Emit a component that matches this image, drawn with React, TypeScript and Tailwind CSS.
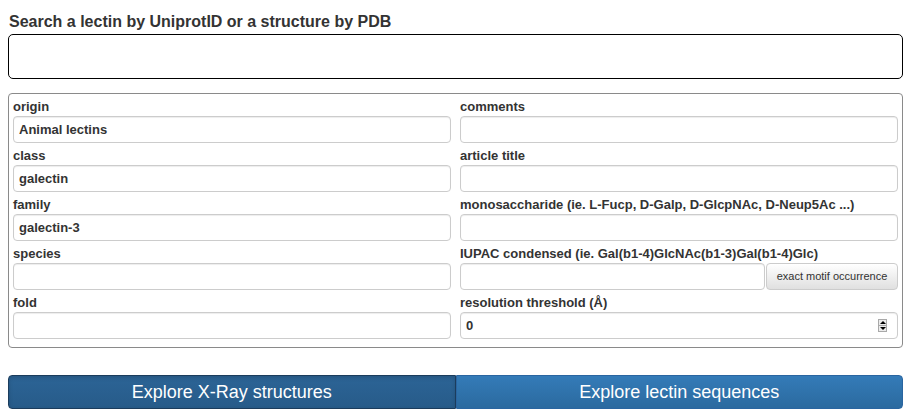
import React from "react";

const font = { fontFamily: '"Liberation Sans", Arial, sans-serif' };

type Field = { label: string; value?: string; kind?: "text" | "motif" | "number" };

// left and right columns of the search form, row by row
const rows: [Field, Field][] = [
  [{ label: "origin", value: "Animal lectins" }, { label: "comments" }],
  [{ label: "class", value: "galectin" }, { label: "article title" }],
  [
    { label: "family", value: "galectin-3" },
    { label: "monosaccharide (ie. L-Fucp, D-Galp, D-GlcpNAc, D-Neup5Ac ...)" },
  ],
  [
    { label: "species" },
    { label: "IUPAC condensed (ie. Gal(b1-4)GlcNAc(b1-3)Gal(b1-4)Glc)", kind: "motif" },
  ],
  [{ label: "fold" }, { label: "resolution threshold (Å)", value: "0", kind: "number" }],
];

function Spinner() {
  return (
    <div className="flex h-[13px] w-[9px] flex-col border border-[#a9a9a9] bg-[#ececec]">
      <div className="flex flex-1 items-center justify-center border-b border-[#a9a9a9]">
        <div className="h-0 w-0 border-x-[3px] border-b-[3px] border-x-transparent border-b-black" />
      </div>
      <div className="flex flex-1 items-center justify-center">
        <div className="h-0 w-0 border-x-[3px] border-t-[3px] border-x-transparent border-t-black" />
      </div>
    </div>
  );
}

function FieldBox({ field }: { field: Field }) {
  const inputCls =
    "h-[27px] w-full rounded-[4px] border border-[#cccccc] bg-white px-[5px] text-[13px] font-bold text-[#333] shadow-[inset_0_1px_1px_rgba(0,0,0,0.075)] outline-none";
  return (
    <div className="mb-[4px]">
      <div className="h-[18px] text-[13px] font-bold leading-[18px] text-[#333]">{field.label}</div>
      {field.kind === "motif" ? (
        <div className="flex gap-[1px]">
          <input className={inputCls + " flex-1"} defaultValue={field.value ?? ""} />
          <button className="h-[27px] w-[132px] shrink-0 rounded-[4px] border border-[#cccccc] bg-gradient-to-b from-[#ffffff] to-[#e0e0e0] text-[11px] text-[#333]">
            exact motif occurrence
          </button>
        </div>
      ) : field.kind === "number" ? (
        <div className="flex h-[27px] items-center rounded-[4px] border border-[#cccccc] bg-white pl-[5px] pr-[10px] shadow-[inset_0_1px_1px_rgba(0,0,0,0.075)]">
          <input
            className="min-w-0 flex-1 text-[13px] font-bold text-[#333] outline-none"
            defaultValue={field.value}
          />
          <Spinner />
        </div>
      ) : (
        <input className={inputCls} defaultValue={field.value ?? ""} />
      )}
    </div>
  );
}

export default function App() {
  return (
    <div className="min-h-screen bg-white pl-[8px] pt-[12px]" style={font}>
      <div className="w-[895px]">
        {/* search bar */}
        <h2 className="mb-[2px] pl-[1px] text-[16px] font-bold leading-[20px] text-[#333]">
          Search a lectin by UniprotID or a structure by PDB
        </h2>
        <input className="block h-[45px] w-full rounded-[5px] border border-black bg-white px-2 outline-none" />

        {/* detailed criteria */}
        <div className="mt-[14px] rounded-[4px] border border-[#8a8a8a] px-[4px] pb-[4px] pt-[4px]">
          <div className="grid grid-cols-2 gap-x-[9px]">
            {rows.map(([l, r], i) => (
              <React.Fragment key={i}>
                <FieldBox field={l} />
                <FieldBox field={r} />
              </React.Fragment>
            ))}
          </div>
        </div>

        {/* result switch */}
        <div className="mt-[27px] flex h-[34px]">
          <button className="flex-1 rounded-l-[4px] border border-[#1b3c5c] bg-gradient-to-b from-[#2c6496] to-[#275b89] text-[18px] text-white shadow-[inset_0_2px_4px_rgba(0,0,0,0.15)]">
            Explore X-Ray structures
          </button>
          <button className="flex-1 rounded-r-[4px] border border-[#2a65a0] bg-gradient-to-b from-[#347bb8] to-[#2b6a9f] text-[18px] text-white">
            Explore lectin sequences
          </button>
        </div>
      </div>
    </div>
  );
}
